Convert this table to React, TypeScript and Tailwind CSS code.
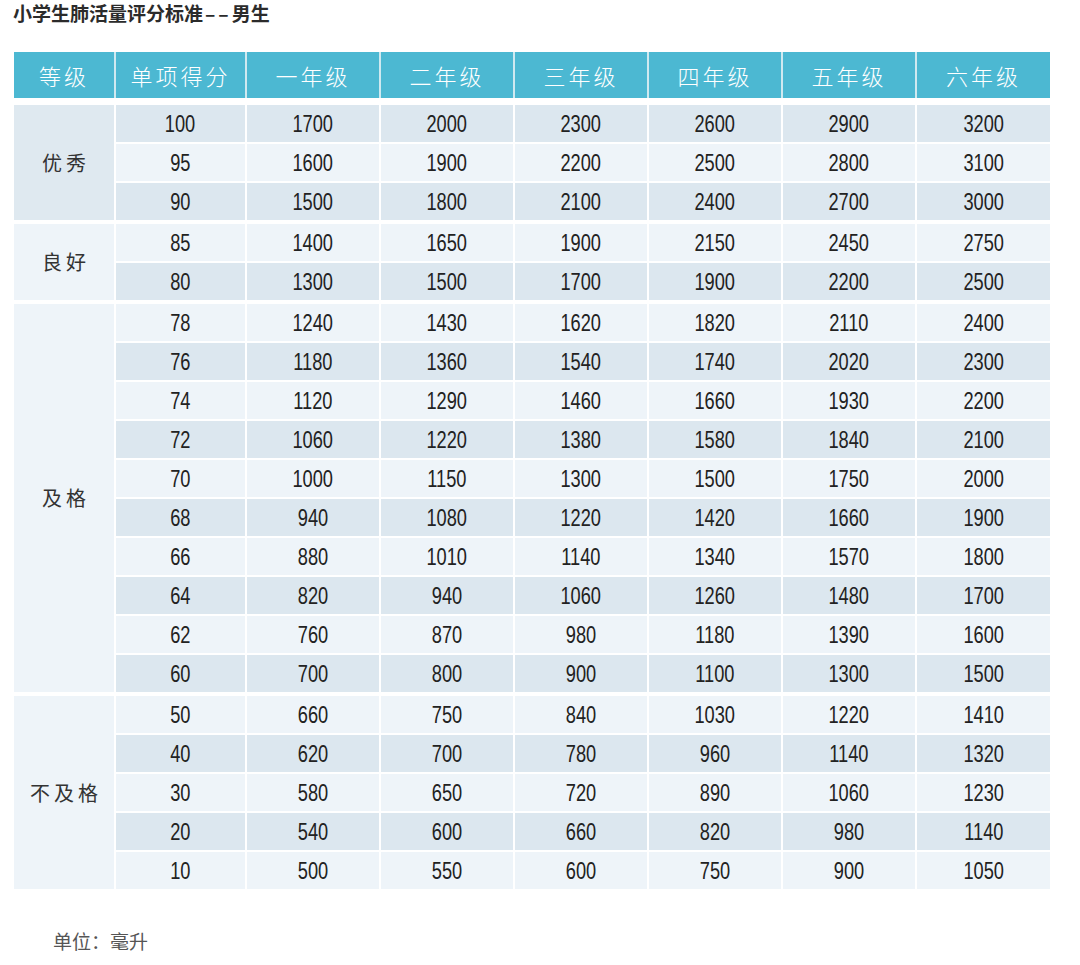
const groups: { label: string; rows: number[][] }[] = [
  {
    label: "优秀",
    rows: [
      [100, 1700, 2000, 2300, 2600, 2900, 3200],
      [95, 1600, 1900, 2200, 2500, 2800, 3100],
      [90, 1500, 1800, 2100, 2400, 2700, 3000],
    ],
  },
  {
    label: "良好",
    rows: [
      [85, 1400, 1650, 1900, 2150, 2450, 2750],
      [80, 1300, 1500, 1700, 1900, 2200, 2500],
    ],
  },
  {
    label: "及格",
    rows: [
      [78, 1240, 1430, 1620, 1820, 2110, 2400],
      [76, 1180, 1360, 1540, 1740, 2020, 2300],
      [74, 1120, 1290, 1460, 1660, 1930, 2200],
      [72, 1060, 1220, 1380, 1580, 1840, 2100],
      [70, 1000, 1150, 1300, 1500, 1750, 2000],
      [68, 940, 1080, 1220, 1420, 1660, 1900],
      [66, 880, 1010, 1140, 1340, 1570, 1800],
      [64, 820, 940, 1060, 1260, 1480, 1700],
      [62, 760, 870, 980, 1180, 1390, 1600],
      [60, 700, 800, 900, 1100, 1300, 1500],
    ],
  },
  {
    label: "不及格",
    rows: [
      [50, 660, 750, 840, 1030, 1220, 1410],
      [40, 620, 700, 780, 960, 1140, 1320],
      [30, 580, 650, 720, 890, 1060, 1230],
      [20, 540, 600, 660, 820, 980, 1140],
      [10, 500, 550, 600, 750, 900, 1050],
    ],
  },
];

const headers = ["等级", "单项得分", "一年级", "二年级", "三年级", "四年级", "五年级", "六年级"];

const cjk = { fontFamily: '"Noto Sans CJK SC", "Noto Sans", sans-serif' };
const num = { fontFamily: '"Liberation Sans", Arial, sans-serif' };

export default function App() {
  let rowIndex = 0;
  return (
    <div className="w-[1080px] h-[965px] bg-white relative" style={cjk}>
      <h1 className="pl-[13px] text-[19px] font-bold text-[#2b2b2b] leading-[26px]">
        小学生肺活量评分标准<span className="tracking-[3px] pl-[2px]">––</span>男生
      </h1>

      <div className="ml-[14px] mt-[26px] w-[1036px]">
        {/* header */}
        <div className="grid grid-cols-[100px_129px_132px_132px_132px_132px_132px_133px] gap-x-[2px] bg-[#cfe9f0]">
          {headers.map((h) => (
            <div
              key={h}
              className="h-[46px] bg-[#4cb8d2] flex items-center justify-center text-white text-[22px] font-light tracking-[3px]"
            >
              {h}
            </div>
          ))}
        </div>

        <div className="mt-[7px] flex flex-col gap-[4px]">
          {groups.map((g, gi) => (
            <div key={g.label} className="flex gap-x-[2px]">
              <div
                className={`w-[100px] shrink-0 flex items-center justify-center text-[20px] text-[#333] tracking-[4px] pl-[4px] ${
                  gi === 0 ? "bg-[#dfe9f0]" : "bg-[#eef4f9]"
                }`}
              >
                {g.label}
              </div>
              <div className="flex-1 flex flex-col gap-[2px]">
                {g.rows.map((r) => {
                  const dark = rowIndex++ % 2 === 0;
                  return (
                    <div
                      key={r[0]}
                      className="grid grid-cols-[129px_132px_132px_132px_132px_132px_133px] gap-x-[2px]"
                    >
                      {r.map((v, i) => (
                        <div
                          key={i}
                          className={`h-[37px] flex items-center justify-center text-[24px] text-[#222] ${
                            dark ? "bg-[#dce7ef]" : "bg-[#eef4f9]"
                          }`}
                          style={num}
                        >
                          <span className="inline-block scale-x-[0.76]">{v}</span>
                        </div>
                      ))}
                    </div>
                  );
                })}
              </div>
            </div>
          ))}
        </div>
      </div>

      <p className="pl-[53px] mt-[38px] text-[19px] text-[#555]">单位：毫升</p>
    </div>
  );
}
